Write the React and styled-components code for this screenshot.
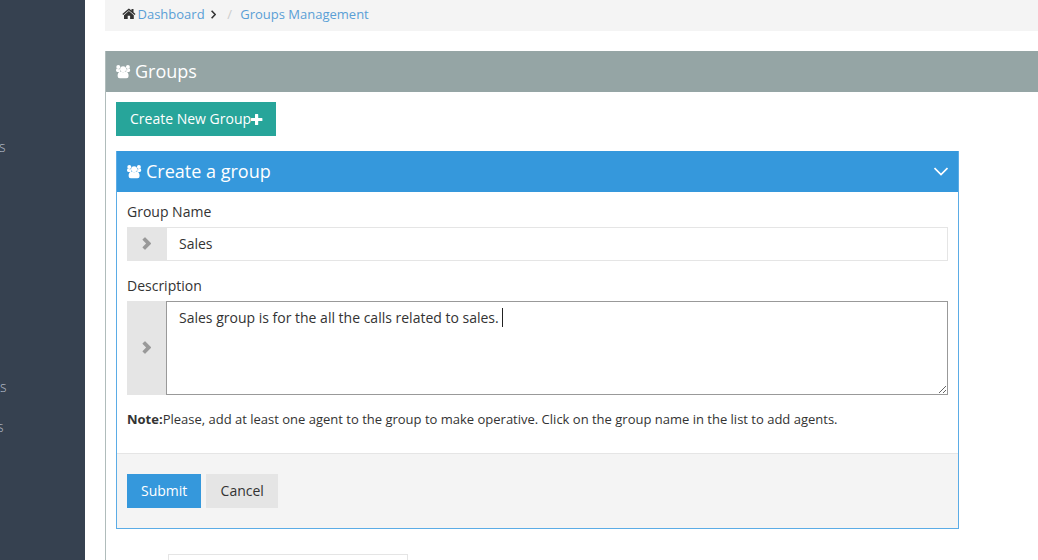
import React from 'react';
import styled, { createGlobalStyle } from 'styled-components';

const GlobalStyle = createGlobalStyle`
  * { box-sizing: border-box; }
  body {
    margin: 0;
    overflow: hidden;
    background: #fff;
    color: #333;
    font: 14px/20px "Open Sans", sans-serif;
  }
  a { color: inherit; text-decoration: none; }
`;

const Page = styled.div`
  display: flex;
  height: 560px;
  overflow: hidden;
`;

const Sidebar = styled.nav`
  flex: 0 0 85px;
  padding-top: 127px;
  overflow: hidden;
  background: #364150;
  color: #b4bcc8;
  font-weight: 300;
`;

const SideItem = styled.a`
  display: block;
  height: 40px;
  line-height: 40px;
  margin-top: ${(p) => p.$gap || 0}px;
  margin-left: ${(p) => p.$shift}px;
`;

const Main = styled.main`
  flex: 1;
  min-width: 0;
  padding-left: 20px;
`;

const Breadcrumb = styled.div`
  display: flex;
  align-items: center;
  height: 31px;
  padding: 0 0 3px 17px;
  margin-bottom: 20px;
  background: #f4f4f4;
  color: #5a9fd6;
  font-size: 13px;
`;

const Divider = styled.span`
  margin: 0 8.200px 0 11.700px;
  color: #ccc;
`;

const Icon = styled.svg`
  display: block;
  flex: none;
  fill: currentColor;
`;

const HomeIcon = styled(Icon)`
  margin: 0 1.5px 0 0;
  color: #333;
`;

const AngleIcon = styled(Icon)`
  margin-left: 6px;
  fill: none;
  stroke: #333;
`;

const Portlet = styled.section`
  width: ${(p) => p.$width};
  border: 1px solid ${(p) => p.$border};
  border-top: 0;
`;

const PortletTitle = styled.h4`
  display: flex;
  align-items: center;
  gap: 4px;
  height: 41px;
  margin: 0;
  padding: 0 10px 0 10px;
  background: ${(p) => p.$color};
  color: #fff;
  font-size: 18px;
  font-weight: 400;
  line-height: 41px;

  & > span { flex: 1; }
`;

const PortletBody = styled.div`
  height: 640px;
  padding: 10px;
`;

const Button = styled.button`
  display: inline-flex;
  align-items: center;
  justify-content: flex-start;
  height: 34px;
  width: ${(p) => p.$width}px;
  padding: 0 0 0 ${(p) => p.$inset || 14}px;
  border: 0;
  background: ${(p) => p.$bg};
  color: ${(p) => p.$fg || '#fff'};
  font: inherit;
  white-space: nowrap;
`;

const FormPortlet = styled(Portlet)`
  margin-top: 15px;
`;

const FormBody = styled.div`
  height: 261px;
  padding: 10px 10px 0;
`;

const Label = styled.label`
  display: block;
  height: 20px;
  margin-bottom: 5px;
`;

const InputGroup = styled.div`
  display: flex;
  height: ${(p) => p.$height}px;
  margin-bottom: ${(p) => p.$after}px;
`;

const Addon = styled.span`
  flex: 0 0 39px;
  display: flex;
  align-items: center;
  justify-content: center;
  background: #e5e5e5;
  color: #999;
`;

const Input = styled.input`
  flex: 1;
  min-width: 0;
  padding: 6px 12px;
  border: 1px solid #e5e5e5;
  border-radius: 0;
  color: #333;
  font: inherit;
  outline: 0;
`;

const TextField = styled.div`
  position: relative;
  flex: 1;
  display: flex;
`;

const TextArea = styled.textarea`
  flex: 1;
  min-width: 0;
  padding: 6px 12px;
  border: 1px solid #999;
  border-radius: 0;
  color: #333;
  font: inherit;
  outline: 0;
  resize: vertical;
`;

const Caret = styled.i`
  position: absolute;
  left: 336px;
  top: 7px;
  width: 1px;
  height: 19px;
  background: #222;
`;

const Note = styled.p`
  margin: 0;
  font-size: 13px;
`;

const FormActions = styled.div`
  display: flex;
  gap: 5px;
  height: 75px;
  padding: 20px 10px;
  border-top: 1px solid #e5e5e5;
  background: #f4f4f4;
`;

const ListSelect = styled.div`
  width: 240px;
  height: 34px;
  margin: 25px 0 0 52px;
  border: 1px solid #e5e5e5;
`;

const GroupIcon = () => (
  <Icon width="15" height="15" viewBox="0 0 15 15">
    <circle cx="2.300" cy="3" r="2" />
    <circle cx="11.900" cy="3" r="2" />
    <path d="M1 4.600Q2.500 5.700 4 5v3H1.400Q0 8 0 6.600 0 4.600 1 4.600zM13.200 4.600Q11.700 5.700 10.200 5v3h2.600q1.400 0 1.400-1.400 0-2-1-2z" />
    <circle cx="7.100" cy="5.200" r="3" />
    <path d="M4.200 7.500Q7.100 9 10 7.500q2.600.8 2.600 4.500 0 2.200-2.200 2.200H3.800q-2.200 0-2.200-2.200 0-3.700 2.600-4.500z" />
  </Icon>
);

const PlusIcon = () => (
  <Icon width="12" height="11" viewBox="0 0 12 11">
    <path d="M4 .5Q4 0 4.500 0h2.200Q7.200 0 7.200 .5V3.900h3.700q.5 0 .5.500v2.200q0 .5-.5.500H7.200v3.400q0 .5-.5.500h-2.200q-.5 0-.5-.5V7.100H.5Q0 7.100 0 6.600v-2.200Q0 3.900 .5 3.900H4z" />
  </Icon>
);

const ChevronIcon = () => (
  <Icon width="9" height="14" viewBox="-.4 0 9 14">
    <path d="M.3 2.300 2.200.4q.4-.4.8 0l5.500 5.600q.4.500 0 1L3 12.600q-.4.4-.8 0L.3 10.700q-.4-.4 0-.8l3.400-3.400L.3 3.100q-.4-.4 0-.8z" />
  </Icon>
);

export default function App() {
  return (
    <Page>
      <GlobalStyle />
      <Sidebar>
        <SideItem $shift={-1}>s</SideItem>
        <SideItem $shift={0} $gap={200}>s</SideItem>
        <SideItem $shift={-3}>s</SideItem>
      </Sidebar>
      <Main>
        <Breadcrumb>
          <HomeIcon width="14" height="12" viewBox="0 0 14 12">
            <path d="M6.200 .9q.7-.6 1.400 0l1.900 1.600V1h2v3.200l2 1.800-.9 1.100L6.900 2.200 1.200 7.100l-.9-1.100z" />
            <path d="M6.900 3 11.800 7.200V11H8.100V7.800H5.700V11H2V7.200z" />
          </HomeIcon>
          <a>Dashboard</a>
          <AngleIcon width="5" height="9" viewBox="0 0 5 9">
            <path d="M.6.8 4.200 4.500.6 8.200" strokeWidth="1.600" />
          </AngleIcon>
          <Divider>/</Divider>
          <a>Groups Management</a>
        </Breadcrumb>
        <Portlet $width="1000px" $border="#b0bcbb">
          <PortletTitle $color="#95a5a5">
            <GroupIcon />
            <span>Groups</span>
          </PortletTitle>
          <PortletBody>
            <Button $width={160} $bg="#27a59a">
              Create New Group
              <PlusIcon />
            </Button>
            <FormPortlet $width="843px" $border="#5bace6">
              <PortletTitle $color="#3598dc">
                <GroupIcon />
                <span>Create a group</span>
                <Icon width="14" height="9" viewBox="0 0 14 9">
                  <path d="M.5 1 7 7.500 13.500 1" fill="none" stroke="#fff" strokeWidth="1.700" />
                </Icon>
              </PortletTitle>
              <FormBody>
                <Label htmlFor="name">Group Name</Label>
                <InputGroup $height={34} $after={15}>
                  <Addon><ChevronIcon /></Addon>
                  <Input id="name" defaultValue="Sales" />
                </InputGroup>
                <Label htmlFor="description">Description</Label>
                <InputGroup $height={94} $after={14}>
                  <Addon><ChevronIcon /></Addon>
                  <TextField>
                    <TextArea id="description" defaultValue="Sales group is for the all the calls related to sales. " />
                    <Caret />
                  </TextField>
                </InputGroup>
                <Note>
                  <b>Note:</b>Please, add at least one agent to the group to make operative. Click on the group name in the list to add agents.
                </Note>
              </FormBody>
              <FormActions>
                <Button $width={74} $bg="#3598dc">Submit</Button>
                <Button $width={72} $inset={14.6} $bg="#e5e5e5" $fg="#333">Cancel</Button>
              </FormActions>
            </FormPortlet>
            <ListSelect />
          </PortletBody>
        </Portlet>
      </Main>
    </Page>
  );
}
